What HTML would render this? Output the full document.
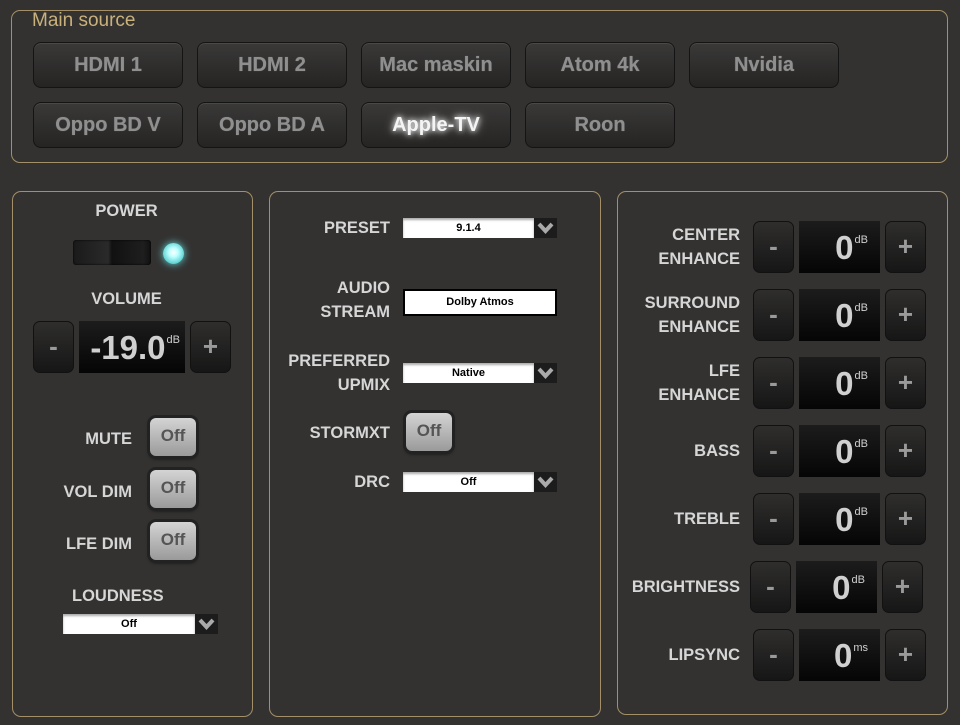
<!DOCTYPE html>
<html><head><meta charset="utf-8"><style>
*{box-sizing:border-box;margin:0;padding:0}
body{width:960px;height:725px;background:#333231;font-family:"Liberation Sans",Arial,sans-serif;position:relative;overflow:hidden}
.a{position:absolute}
.panel{position:absolute;border:1px solid #a38f68;border-radius:9px}
.src{position:absolute;width:150px;height:46px;border-radius:8px;background:linear-gradient(#3a3938,#252423);border:1px solid #151414;box-shadow:inset 0 1px 0 #4a4948;color:#8f8f8f;font-weight:bold;font-size:20px;text-align:center;line-height:44px;text-shadow:0 0 0.6px #8f8f8f}
.src.on{color:#f4f4f4;text-shadow:0 0 6px #fff,0 0 10px #bbb}
.lbl{position:absolute;color:#d6d6d6;font-weight:bold;font-size:16.5px;text-align:right;line-height:24px}
.off{position:absolute;width:46px;height:38px;border-radius:6px;background:linear-gradient(#d4d4d4,#9a9a9a);box-shadow:0 0 0 3px #222,0 2px 4px #000;color:#555;font-weight:bold;font-size:17px;text-align:center;line-height:36px}
.sel{position:absolute;height:20px}
.sel .w{position:absolute;left:0;top:0;bottom:0;background:#fff;color:#000;font-weight:bold;font-size:11px;text-align:center;line-height:20px;box-shadow:inset 0 2px 2px #aaa}
.sel .c{position:absolute;right:0;top:0;width:23px;height:20px;background:#1c1c1c}
.sel .c svg{position:absolute;left:3px;top:3px}
.pm{position:absolute;height:52px}
.pm .m,.pm .p{position:absolute;top:0;width:41px;height:52px;border-radius:7px;background:linear-gradient(#2f2e2d,#161616);border:1px solid #111;color:#9a9a9a;font-weight:bold;font-size:26px;text-align:center;line-height:48px}
.pm .m{left:0}
.pm .d{position:absolute;top:0;height:52px;background:linear-gradient(#1c1c1c,#050505);color:#d0d0d0;font-weight:bold;font-size:33px;text-align:right;line-height:54px}
.pm .d sup{font-size:11px;font-weight:normal;vertical-align:top;position:relative;top:-8px;margin-left:1px}
</style></head><body>

<div class="panel" style="left:11px;top:10px;width:937px;height:153px"></div>
<div class="a" style="left:32px;top:10px;color:#c9b17c;font-size:19px">Main source</div>
<div class="src" style="left:33px;top:42px">HDMI 1</div>
<div class="src" style="left:197px;top:42px">HDMI 2</div>
<div class="src" style="left:361px;top:42px">Mac maskin</div>
<div class="src" style="left:525px;top:42px">Atom 4k</div>
<div class="src" style="left:689px;top:42px">Nvidia</div>
<div class="src" style="left:33px;top:102px">Oppo BD V</div>
<div class="src" style="left:197px;top:102px">Oppo BD A</div>
<div class="src on" style="left:361px;top:102px">Apple-TV</div>
<div class="src" style="left:525px;top:102px">Roon</div>

<div class="panel" style="left:12px;top:191px;width:241px;height:526px"></div>
<div class="panel" style="left:269px;top:191px;width:332px;height:526px"></div>
<div class="panel" style="left:617px;top:191px;width:331px;height:524px"></div>

<!-- left -->
<div class="lbl" style="left:12px;width:229px;top:199px;text-align:center">POWER</div>
<div class="a" style="left:73px;top:240px;width:78px;height:25px;border-radius:3px;background:linear-gradient(90deg,#1a1a1a,#2a2a2a 45%,#111 50%,#1e1e1e 90%,#111);box-shadow:inset 0 0 2px #000"></div>
<div class="a" style="left:163px;top:243px;width:21px;height:21px;border-radius:50%;background:radial-gradient(circle at 50% 45%,#fff 0,#bff 30%,#5cc 75%,#2a6 100%);box-shadow:0 0 8px #6dd"></div>
<div class="lbl" style="left:12px;width:229px;top:287px;text-align:center">VOLUME</div>
<div class="pm" style="left:33px;top:321px;width:198px">
 <div class="m">-</div><div class="d" style="left:46px;width:106px;padding-right:5px">-19.0<sup>dB</sup></div><div class="p" style="left:157px">+</div>
</div>
<div class="lbl" style="left:20px;width:112px;top:427px">MUTE</div>
<div class="off" style="left:150px;top:418px">Off</div>
<div class="lbl" style="left:20px;width:112px;top:480px">VOL DIM</div>
<div class="off" style="left:150px;top:470px">Off</div>
<div class="lbl" style="left:20px;width:112px;top:532px">LFE DIM</div>
<div class="off" style="left:150px;top:522px">Off</div>
<div class="lbl" style="left:72px;top:584px;text-align:left">LOUDNESS</div>
<div class="sel" style="left:63px;top:614px;width:155px"><div class="w" style="width:132px">Off</div><div class="c"><svg width="17" height="14"><path d="M2 3 L8.5 10 L15 3" stroke="#aaa" stroke-width="4" fill="none"/></svg></div></div>

<!-- middle -->
<div class="lbl" style="left:280px;width:110px;top:216px">PRESET</div>
<div class="sel" style="left:403px;top:218px;width:154px"><div class="w" style="width:131px">9.1.4</div><div class="c"><svg width="17" height="14"><path d="M2 3 L8.5 10 L15 3" stroke="#aaa" stroke-width="4" fill="none"/></svg></div></div>
<div class="lbl" style="left:280px;width:110px;top:276px">AUDIO<br>STREAM</div>
<div class="a" style="left:403px;top:289px;width:154px;height:27px;background:#fff;border:2px solid #000;color:#000;font-weight:bold;font-size:11px;text-align:center;line-height:22px">Dolby Atmos</div>
<div class="lbl" style="left:270px;width:120px;top:349px">PREFERRED<br>UPMIX</div>
<div class="sel" style="left:403px;top:363px;width:154px"><div class="w" style="width:131px">Native</div><div class="c"><svg width="17" height="14"><path d="M2 3 L8.5 10 L15 3" stroke="#aaa" stroke-width="4" fill="none"/></svg></div></div>
<div class="lbl" style="left:280px;width:110px;top:421px">STORMXT</div>
<div class="off" style="left:406px;top:413px">Off</div>
<div class="lbl" style="left:280px;width:110px;top:470px">DRC</div>
<div class="sel" style="left:403px;top:472px;width:154px"><div class="w" style="width:131px">Off</div><div class="c"><svg width="17" height="14"><path d="M2 3 L8.5 10 L15 3" stroke="#aaa" stroke-width="4" fill="none"/></svg></div></div>

<!-- right -->
<div class="lbl" style="left:620px;width:120px;top:223px">CENTER<br>ENHANCE</div>
<div class="pm" style="left:753px;top:221px;width:173px"><div class="m">-</div><div class="d" style="left:46px;width:81px;padding-right:12px">0<sup>dB</sup></div><div class="p" style="left:132px">+</div></div>
<div class="lbl" style="left:620px;width:120px;top:291px">SURROUND<br>ENHANCE</div>
<div class="pm" style="left:753px;top:289px;width:173px"><div class="m">-</div><div class="d" style="left:46px;width:81px;padding-right:12px">0<sup>dB</sup></div><div class="p" style="left:132px">+</div></div>
<div class="lbl" style="left:620px;width:120px;top:359px">LFE<br>ENHANCE</div>
<div class="pm" style="left:753px;top:357px;width:173px"><div class="m">-</div><div class="d" style="left:46px;width:81px;padding-right:12px">0<sup>dB</sup></div><div class="p" style="left:132px">+</div></div>
<div class="lbl" style="left:620px;width:120px;top:439px">BASS</div>
<div class="pm" style="left:753px;top:425px;width:173px"><div class="m">-</div><div class="d" style="left:46px;width:81px;padding-right:12px">0<sup>dB</sup></div><div class="p" style="left:132px">+</div></div>
<div class="lbl" style="left:620px;width:120px;top:507px">TREBLE</div>
<div class="pm" style="left:753px;top:493px;width:173px"><div class="m">-</div><div class="d" style="left:46px;width:81px;padding-right:12px">0<sup>dB</sup></div><div class="p" style="left:132px">+</div></div>
<div class="lbl" style="left:620px;width:120px;top:575px">BRIGHTNESS</div>
<div class="pm" style="left:750px;top:561px;width:173px"><div class="m">-</div><div class="d" style="left:46px;width:81px;padding-right:12px">0<sup>dB</sup></div><div class="p" style="left:132px">+</div></div>
<div class="lbl" style="left:620px;width:120px;top:643px">LIPSYNC</div>
<div class="pm" style="left:753px;top:629px;width:173px"><div class="m">-</div><div class="d" style="left:46px;width:81px;padding-right:12px">0<sup>ms</sup></div><div class="p" style="left:132px">+</div></div>

</body></html>
